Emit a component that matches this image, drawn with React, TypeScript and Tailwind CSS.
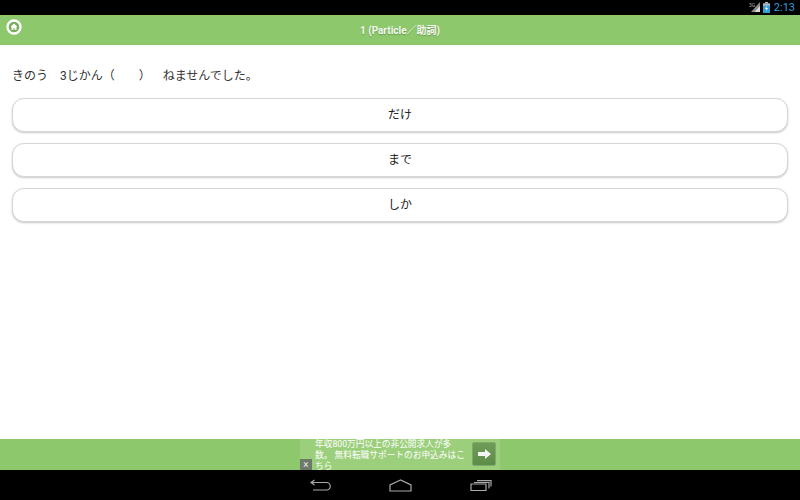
const cjk = "font-['Roboto','Noto_Sans_CJK_JP',sans-serif]";

const answers = ['だけ', 'まで', 'しか'];

function StatusBar() {
  return (
    <div className="flex h-[15px] items-center justify-end bg-black pr-[5px]">
      <svg width="11" height="11" viewBox="0 0 11 11" className="mr-[3px]">
        <path d="M11 0v10H2z" fill="#8a8a8a" />
        <path d="M11 4v6H5.500z" fill="#dcdcdc" />
        <text x="0" y="5" fontSize="5" fill="#aaa" fontFamily="Roboto">3G</text>
      </svg>
      <svg width="7" height="11" viewBox="0 0 7 11" className="mr-[4px]">
        <rect x="2" y="0" width="3" height="1.500" fill="#bbb" />
        <rect x="0" y="1.500" width="7" height="9.500" fill="#2f9fd8" />
        <rect x="0" y="1.500" width="7" height="2" fill="#bbb" />
        <path d="M4 3.500 2 7h1.500L3 9.500 5 6H3.500z" fill="#fff" />
      </svg>
      <span className="font-['Roboto',sans-serif] text-[11px] leading-none text-[#2f9fd8]">2:13</span>
    </div>
  );
}

function Header() {
  return (
    <div className="relative flex h-[30px] items-center justify-center bg-[#8dc86c]">
      <svg width="16" height="16" viewBox="0 0 16 16" className="absolute left-[6px] top-[4px]">
        <circle cx="8" cy="8" r="6.500" fill="#78ad5a" stroke="#fff" strokeWidth="2.400" />
        <path d="M8 4.500 4.500 7.800h1v3h2V9h1v1.800h2v-3h1z" fill="#fff" />
      </svg>
      <span className={`${cjk} text-[10px] font-bold text-[#f4f8f0] [text-shadow:0_1px_1px_#6a9a50]`}>
        1 (Particle／助詞)
      </span>
    </div>
  );
}

function AdBanner() {
  return (
    <div className="flex h-[31px] justify-center bg-[#8dc86c]">
      <div className="relative flex w-[200px] overflow-hidden bg-[#9ccf7c]">
        <div className={`${cjk} ml-[15px] w-[157px] whitespace-nowrap text-[8.700px] leading-[11px] text-white`}>
          年収800万円以上の非公開求人が多
          <br />
          数。 無料転職サポートのお申込みはこ
          <br />
          ちら
        </div>
        <div className="mt-[3px] flex h-[24px] w-[24px] items-center justify-center rounded-[2px] border border-[#7fa968] bg-gradient-to-b from-[#6f9d58] to-[#5d8c48]">
          <svg width="13" height="10" viewBox="0 0 13 10">
            <path d="M0 3h7V0l6 5-6 5V7H0z" fill="#f4f4f4" />
          </svg>
        </div>
        <div className="absolute bottom-0 left-0 flex h-[11px] w-[12px] items-center justify-center bg-[#6e7a68] font-['Roboto',sans-serif] text-[10px] leading-none text-[#e8e8e8]">
          ×
        </div>
      </div>
    </div>
  );
}

function NavBar() {
  return (
    <div className="flex h-[30px] items-center justify-center gap-[58px] bg-black pl-[1px]">
      <svg width="21" height="12" viewBox="0 0 21 12" fill="none" stroke="#aaaaaa" strokeWidth="1.200">
        <path d="M4.500 1 1 3.500 4.500 6M1 3.500h15.500a3.500 3.500 0 0 1 0 7.500H3" />
      </svg>
      <svg width="23" height="13" viewBox="0 0 23 13" fill="none" stroke="#aaaaaa" strokeWidth="1.200">
        <path d="M11.500 1 1 6v6h21V6z" />
      </svg>
      <svg width="22" height="11" viewBox="0 0 22 11" fill="none" stroke="#aaaaaa" strokeWidth="1.200">
        <path d="M1 4h15v6.500H1zM4 2.500h15v6M7 .6h14v6" />
      </svg>
    </div>
  );
}

export default function App() {
  return (
    <div className="flex h-[500px] w-[800px] flex-col overflow-hidden bg-white">
      <StatusBar />
      <Header />
      <main className="flex-1 px-[12px] pt-[22px]">
        <p className={`${cjk} h-[20px] whitespace-pre text-[12px] leading-[18px] text-[#333]`}>
          きのう　3じかん（　　）　  ねませんでした。
        </p>
        <div className="mt-[11px] flex flex-col gap-[11px]">
          {answers.map((answer) => (
            <button
              key={answer}
              className={`${cjk} h-[34px] w-full rounded-[12px] border border-[#d6d6d6] bg-white text-[12px] text-[#222] shadow-[0_1px_2px_rgba(0,0,0,0.22)]`}
            >
              {answer}
            </button>
          ))}
        </div>
      </main>
      <AdBanner />
      <NavBar />
    </div>
  );
}
